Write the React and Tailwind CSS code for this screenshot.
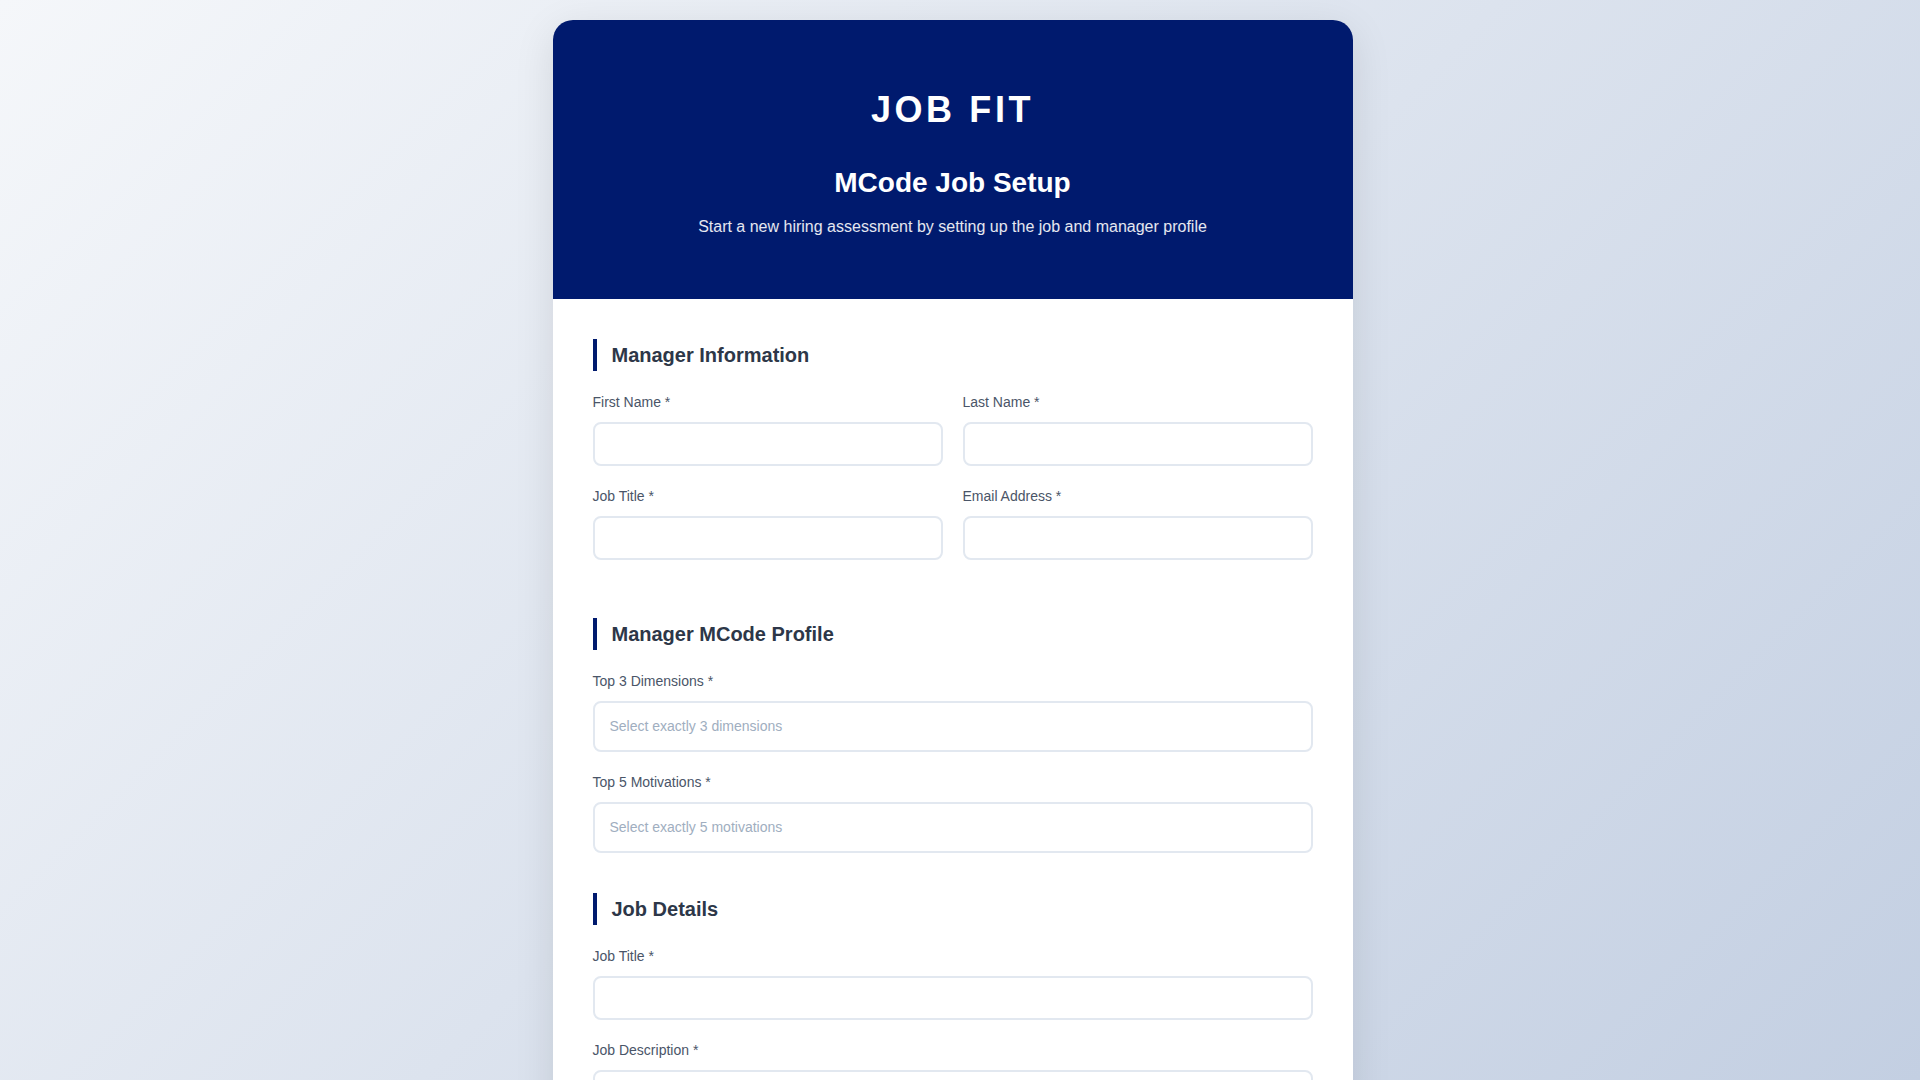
import React from 'react';

// Section heading with the navy bar on the left
const SectionTitle = ({ children }) => (
  <h3 className="flex items-center h-8 border-l-4 border-[#001a6e] pl-[15px] mb-[21px] text-[20px] font-bold text-[#2d3748]">
    {children}
  </h3>
);

const Label = ({ children }) => (
  <label className="block text-[14px] leading-[21px] mb-[9px] text-[#4a5568]">
    {children}
  </label>
);

const TextField = ({ label, type = 'text' }) => (
  <div className="mb-5">
    <Label>{label}</Label>
    <input
      type={type}
      className="block w-full h-[44px] px-[15px] text-[14px] bg-white border-2 border-[#e2e8f0] rounded-lg outline-none text-[#2d3748]"
    />
  </div>
);

const MultiSelect = ({ label, placeholder }) => (
  <div className="mb-5">
    <Label>{label}</Label>
    <div className="flex items-center w-full h-[51px] px-[15px] bg-white border-2 border-[#e2e8f0] rounded-lg text-[14px] text-[#a0aec0] cursor-pointer">
      {placeholder}
    </div>
  </div>
);

export default function App() {
  return (
    // right padding leaves room where the browser scrollbar sits
    <div className="min-h-screen bg-fixed bg-[linear-gradient(135deg,#f5f7fa_0%,#c3cfe2_100%)] pt-5 pb-5 pl-5 pr-[35px] font-['Liberation_Sans',Arial,sans-serif]">
      <div className="max-w-[800px] mx-auto bg-white rounded-[20px] overflow-hidden shadow-[0_10px_40px_rgba(0,0,0,0.1)]">
        {/* header */}
        <div className="bg-[#001a6e] text-white text-center pt-[68px] pb-[60px] px-10">
          <h1 className="text-[36px] leading-[43px] font-bold tracking-widest">JOB FIT</h1>
          <h2 className="mt-[35px] text-[28px] leading-[34px] font-bold">MCode Job Setup</h2>
          <p className="mt-[15px] text-base leading-6 text-white/90">
            Start a new hiring assessment by setting up the job and manager profile
          </p>
        </div>

        <form className="px-10 pt-10 pb-10">
          <div className="mb-[38px]">
            <SectionTitle>Manager Information</SectionTitle>
            <div className="grid grid-cols-2 gap-x-5">
              <TextField label="First Name *" />
              <TextField label="Last Name *" />
              <TextField label="Job Title *" />
              <TextField label="Email Address *" type="email" />
            </div>
          </div>

          <div className="mb-10">
            <SectionTitle>Manager MCode Profile</SectionTitle>
            <MultiSelect label="Top 3 Dimensions *" placeholder="Select exactly 3 dimensions" />
            <MultiSelect label="Top 5 Motivations *" placeholder="Select exactly 5 motivations" />
          </div>

          <div className="mb-10">
            <SectionTitle>Job Details</SectionTitle>
            <TextField label="Job Title *" />
            <div className="mb-5">
              <Label>Job Description *</Label>
              <textarea
                rows={6}
                className="block w-full min-h-[150px] px-[15px] py-3 text-[14px] bg-white border-2 border-[#e2e8f0] rounded-lg outline-none resize-y"
              />
            </div>
          </div>

          <button
            type="button"
            className="w-full h-[52px] rounded-lg bg-[#001a6e] text-white text-[16px] font-bold"
          >
            Create Job Assessment
          </button>
        </form>
      </div>
    </div>
  );
}
